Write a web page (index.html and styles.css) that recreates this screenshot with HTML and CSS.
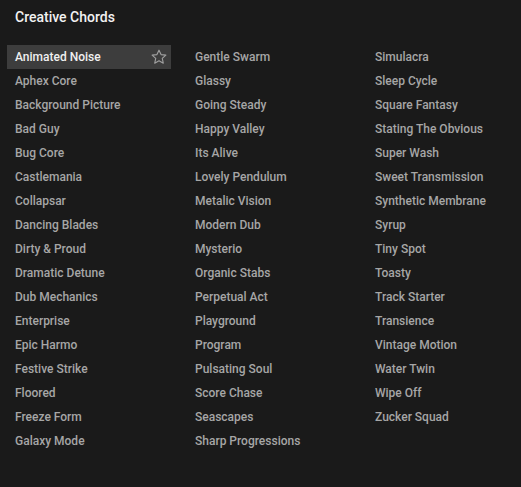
FILE: index.html
```html
<!DOCTYPE html>
<html>
<head>
<meta charset="utf-8">
<link rel="stylesheet" href="styles.css">
</head>
<body>
<div class="panel">
  <h1 class="title">Creative Chords</h1>
  <div class="grid">
    <ul class="col">
      <li class="item active"><span>Animated Noise</span>
        <svg class="star" width="16" height="16" viewBox="0 0 24 24"><path d="M12 1.8l3.1 6.6 7.2.8-5.4 4.9 1.5 7.1L12 17.6l-6.4 3.6 1.5-7.1-5.4-4.9 7.2-.8z" fill="none" stroke="currentColor" stroke-width="1.7" stroke-linejoin="round"/></svg>
      </li>
      <li class="item">Aphex Core</li>
      <li class="item">Background Picture</li>
      <li class="item">Bad Guy</li>
      <li class="item">Bug Core</li>
      <li class="item">Castlemania</li>
      <li class="item">Collapsar</li>
      <li class="item">Dancing Blades</li>
      <li class="item">Dirty &amp; Proud</li>
      <li class="item">Dramatic Detune</li>
      <li class="item">Dub Mechanics</li>
      <li class="item">Enterprise</li>
      <li class="item">Epic Harmo</li>
      <li class="item">Festive Strike</li>
      <li class="item">Floored</li>
      <li class="item">Freeze Form</li>
      <li class="item">Galaxy Mode</li>
    </ul>
    <ul class="col">
      <li class="item">Gentle Swarm</li>
      <li class="item">Glassy</li>
      <li class="item">Going Steady</li>
      <li class="item">Happy Valley</li>
      <li class="item">Its Alive</li>
      <li class="item">Lovely Pendulum</li>
      <li class="item">Metalic Vision</li>
      <li class="item">Modern Dub</li>
      <li class="item">Mysterio</li>
      <li class="item">Organic Stabs</li>
      <li class="item">Perpetual Act</li>
      <li class="item">Playground</li>
      <li class="item">Program</li>
      <li class="item">Pulsating Soul</li>
      <li class="item">Score Chase</li>
      <li class="item">Seascapes</li>
      <li class="item">Sharp Progressions</li>
    </ul>
    <ul class="col">
      <li class="item">Simulacra</li>
      <li class="item">Sleep Cycle</li>
      <li class="item">Square Fantasy</li>
      <li class="item">Stating The Obvious</li>
      <li class="item">Super Wash</li>
      <li class="item">Sweet Transmission</li>
      <li class="item">Synthetic Membrane</li>
      <li class="item">Syrup</li>
      <li class="item">Tiny Spot</li>
      <li class="item">Toasty</li>
      <li class="item">Track Starter</li>
      <li class="item">Transience</li>
      <li class="item">Vintage Motion</li>
      <li class="item">Water Twin</li>
      <li class="item">Wipe Off</li>
      <li class="item">Zucker Squad</li>
    </ul>
  </div>
</div>
</body>
</html>
```
FILE: styles.css
```css
html, body {
  margin: 0;
  padding: 0;
  background: #1a1a1a;
  height: 100%;
}
body {
  font-family: Roboto, "Liberation Sans", sans-serif;
}
.panel {
  padding: 8px 7px 0 7px;
}
.title {
  margin: 0 0 0 8px;
  font-size: 14px;
  font-weight: 500;
  color: #f2f2f2;
  line-height: 18px;
}
.grid {
  display: grid;
  grid-template-columns: 164px 164px 164px;
  column-gap: 16px;
  margin-top: 19px;
}
.col {
  list-style: none;
  margin: 0;
  padding: 0;
}
.item {
  height: 24px;
  line-height: 24px;
  padding-left: 8px;
  font-size: 12px;
  font-weight: 500;
  color: #a6a6a6;
  display: flex;
  align-items: center;
  justify-content: space-between;
  white-space: nowrap;
}
.item.active {
  background: #3d3d3d;
  color: #f0f0f0;
  padding-right: 4px;
}
.star {
  color: #a0a0a0;
  margin-top: -1px;
}
```
